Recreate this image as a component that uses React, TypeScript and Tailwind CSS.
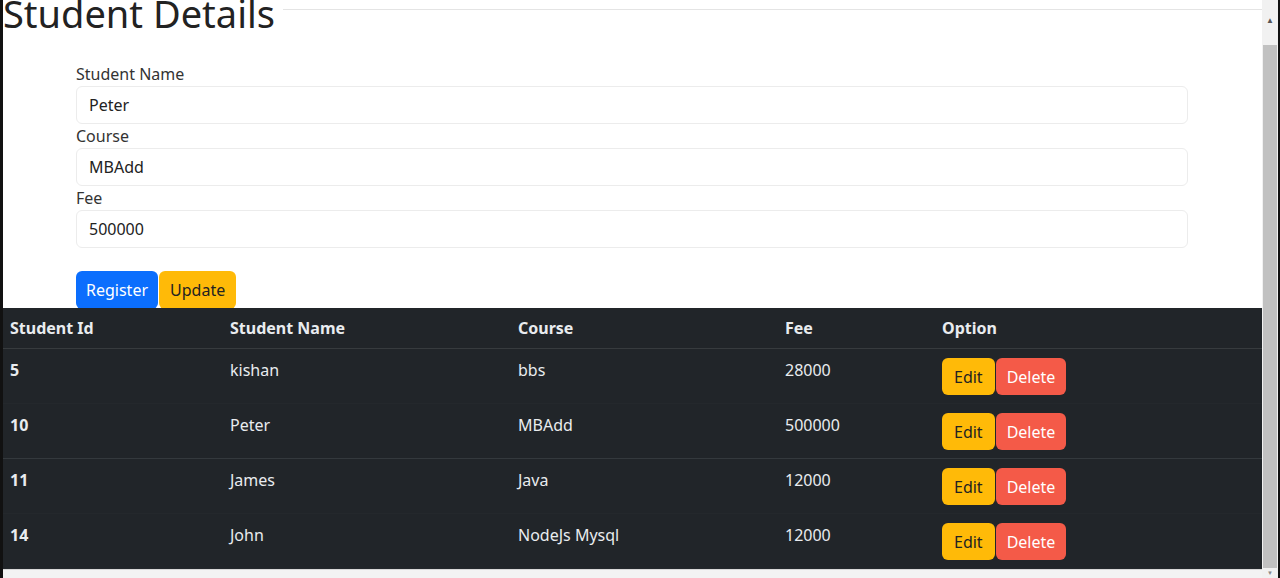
import React from "react";

const students = [
  { id: 5, name: "kishan", course: "bbs", fee: 28000 },
  { id: 10, name: "Peter", course: "MBAdd", fee: 500000 },
  { id: 11, name: "James", course: "Java", fee: 12000 },
  { id: 14, name: "John", course: "NodeJs Mysql", fee: 12000 },
];

const Field = ({ label, value }: { label: string; value: string }) => (
  <div>
    <label className="block leading-6 text-[#333]">{label}</label>
    <div className="h-[38px] rounded-md border border-[#ececec] px-3 leading-[36px] text-[#222]">
      {value}
    </div>
  </div>
);

export default function App() {
  return (
    <div
      className="flex h-[578px] w-[1280px] overflow-hidden bg-white text-base"
      style={{ fontFamily: '"Noto Sans", "Open Sans", sans-serif' }}
    >
      {/* left frame edge */}
      <div className="w-[3px] shrink-0 bg-[#111]" />

      <div className="flex w-[1259px] shrink-0 flex-col">
        {/* Title */}
        <div className="flex h-[62px] items-start">
          <h1 className="-mt-[10px] text-[38px] leading-[46px] font-normal text-[#222]">Student Details</h1>
          <div className="mt-[9px] ml-2 flex-1 border-t border-[#e4e4e4]" />
        </div>

        {/* Form */}
        <div className="ml-[73px] w-[1112px]">
          <Field label="Student Name" value="Peter" />
          <Field label="Course" value="MBAdd" />
          <Field label="Fee" value="500000" />
          <div className="mt-[23px] flex">
            <button className="h-[38px] rounded-md bg-[#0b6efd] px-[10px] text-white">Register</button>
            <button className="ml-px h-[38px] rounded-md bg-[#ffba08] px-[11px] text-[#222]">Update</button>
          </div>
        </div>

        {/* Table */}
        <table className="-mt-px w-full border-collapse bg-[#212529] text-left text-[#e9ecef]">
          <thead>
            <tr className="border-b border-[#373b3e]">
              <th className="w-[227px] py-2 pl-[7px] font-bold leading-6">Student Id</th>
              <th className="w-[288px] py-2 font-bold leading-6">Student Name</th>
              <th className="w-[267px] py-2 font-bold leading-6">Course</th>
              <th className="w-[157px] py-2 font-bold leading-6">Fee</th>
              <th className="py-2 font-bold leading-6">Option</th>
            </tr>
          </thead>
          <tbody>
            {students.map((s, i) => (
              <tr key={s.id} className={i === 1 ? "border-b border-[#34393d]" : "border-b border-[#24282c]"}>
                <td className="pt-[9px] pb-2 pl-[7px] align-top font-bold leading-6">{s.id}</td>
                <td className="pt-[9px] pb-2 align-top leading-6">{s.name}</td>
                <td className="pt-[9px] pb-2 align-top leading-6">{s.course}</td>
                <td className="pt-[9px] pb-2 align-top leading-6">{s.fee}</td>
                <td className="pt-[9px] pb-2 align-top">
                  <div className="flex">
                    <button className="h-[37px] rounded-md bg-[#ffba08] px-3 text-[#222]">Edit</button>
                    <button className="ml-px h-[37px] rounded-md bg-[#f45a48] px-[11px] text-white">Delete</button>
                  </div>
                </td>
              </tr>
            ))}
          </tbody>
        </table>

        {/* bottom strip */}
        <div className="flex-1 border-t border-[#d8d8d8] bg-[#f3f3f3]" />
      </div>

      {/* scrollbar */}
      <div className="flex w-4 shrink-0 flex-col bg-[#f1f1f1]">
        <div className="flex h-[45px] items-start justify-center pt-[14px] text-[8px] text-[#555]">▲</div>
        <div className="mx-px flex-1 bg-[#c1c1c1]" />
        <div className="flex h-[10px] items-center justify-center text-[6px] text-[#888]">▼</div>
      </div>
      <div className="flex-1 bg-[#111]" />
    </div>
  );
}
